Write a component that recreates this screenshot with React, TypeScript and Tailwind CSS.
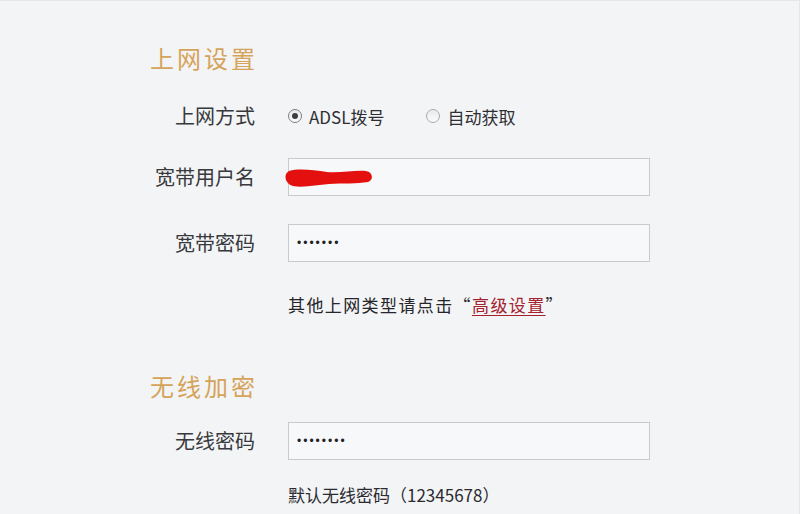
import React from 'react';

const cjk = { fontFamily: '"Noto Sans CJK SC", "Noto Sans", sans-serif' };

const Radio: React.FC<{ checked?: boolean; label: string }> = ({ checked, label }) => (
  <label className="flex items-center gap-[7px] cursor-pointer">
    <span
      className={`w-[14px] h-[14px] rounded-full border flex items-center justify-center bg-gradient-to-b from-[#e9eaec] to-[#fbfbfc] ${
        checked ? 'border-[#7d7f83]' : 'border-[#a9abaf]'
      }`}
    >
      {checked && <span className="w-[6px] h-[6px] rounded-full bg-[#3c3d40]" />}
    </span>
    <span className="text-[17px] text-[#2e2e33] leading-none">{label}</span>
  </label>
);

const Field: React.FC<{ label: string; children: React.ReactNode; className?: string }> = ({
  label,
  children,
  className = '',
}) => (
  <div className={`flex items-center gap-[33px] h-[38px] ${className}`}>
    <span className="w-[105px] text-right text-[20px] text-[#38393c] whitespace-nowrap">{label}</span>
    {children}
  </div>
);

const TextBox: React.FC<{ password?: string; children?: React.ReactNode }> = ({ password, children }) => (
  <div className="relative w-[362px] h-[38px] border border-[#c9cacd] bg-[#f7f8fa]">
    {password !== undefined && (
      <input
        readOnly
        type="password"
        value={password}
        className="w-full h-full bg-transparent outline-none px-[8px] text-[12px] tracking-[2px] text-[#222]"
        style={{ fontFamily: '"Liberation Sans", sans-serif' }}
      />
    )}
    {children}
  </div>
);

const SectionTitle: React.FC<{ children: React.ReactNode; className?: string }> = ({ children, className = '' }) => (
  <h2 className={`h-[32px] leading-[32px] text-[24px] tracking-[3px] text-[#d6a35a] ${className}`}>{children}</h2>
);

export default function App() {
  return (
    <div
      className="w-[800px] h-[514px] overflow-hidden bg-[#f3f4f6] border-t border-r border-[#e4e6e9] pt-[41px] pl-[150px]"
      style={cjk}
    >
      <SectionTitle>上网设置</SectionTitle>

      <Field label="上网方式" className="mt-[23px]">
        <div className="flex items-center gap-[42px]">
          <Radio checked label="ADSL拨号" />
          <Radio label="自动获取" />
        </div>
      </Field>

      <Field label="宽带用户名" className="mt-[23px]">
        <TextBox>
          {/* hand-drawn marker over the account name */}
          <svg className="absolute -left-[6px] top-[8px]" width="92" height="22" viewBox="0 0 92 22">
            <path
              d="M6 4 C16 1 30 3 44 5 C58 6 72 3 83 4 C90 5 91 13 85 15 C74 17 60 16 46 17 C34 18 20 21 10 19 C2 17 0 7 6 4 Z"
              fill="#e3100f"
            />
          </svg>
        </TextBox>
      </Field>

      <Field label="宽带密码" className="mt-[28px]">
        <TextBox password="1234567" />
      </Field>

      <p className="mt-[31px] ml-[138px] h-[24px] leading-[24px] text-[17px] tracking-[1.4px] text-[#26262a] whitespace-nowrap">
        其他上网类型请点击“
        <a href="#" className="text-[#a3222e] underline underline-offset-[3px]">
          高级设置
        </a>
        ”
      </p>

      <SectionTitle className="mt-[53px]">无线加密</SectionTitle>

      <Field label="无线密码" className="mt-[20px]">
        <TextBox password="12345678" />
      </Field>

      <p className="mt-[23px] ml-[138px] h-[24px] leading-[24px] text-[17px] text-[#2b2b30] whitespace-nowrap">
        默认无线密码（12345678）
      </p>
    </div>
  );
}
